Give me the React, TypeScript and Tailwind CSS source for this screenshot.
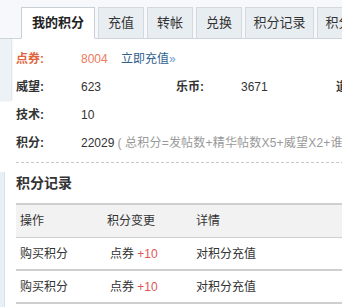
import React from "react";

const font = { fontFamily: '"Liberation Sans", "Noto Sans CJK SC", sans-serif' };

function Tab({ label, active, w }: { label: string; active?: boolean; w: string }) {
  if (active) {
    return (
      <div className={`${w} h-[32px] -mb-px bg-white border border-[#c9cfd6] border-b-white flex items-center justify-center text-[13px] font-bold text-[#222]`}>
        {label}
      </div>
    );
  }
  return (
    <div className={`${w} shrink-0 h-[31px] bg-[#e8edf2] border border-[#d3d9df] border-b-0 flex items-center justify-center text-[13px] text-[#333]`}>
      {label}
    </div>
  );
}

function Row({ children }: { children: React.ReactNode }) {
  return <div className="h-[28px] flex items-center whitespace-nowrap">{children}</div>;
}

export default function App() {
  return (
    <div className="w-[342px] h-[307px] overflow-hidden bg-white text-[12px] text-[#333]" style={font}>
      <div className="h-[39px] bg-[#f6f8fb] border-b border-[#cfd4da] flex items-end pl-[21px] gap-[3px]">
        <Tab label="我的积分" active w="w-[74px] shrink-0" />
        <Tab label="充值" w="w-[46px]" />
        <Tab label="转帐" w="w-[46px]" />
        <Tab label="兑换" w="w-[46px]" />
        <Tab label="积分记录" w="w-[69px]" />
        <Tab label="积分规则" w="w-[69px]" />
      </div>
      <div className="flex">
        <div className="w-[12px] shrink-0 flex flex-col">
          <div className="h-[61px] bg-[#edf2f7] border-r border-[#e0e6ec] shadow-[0_1px_2px_rgba(0,0,0,0.1)]" />
          <div className="h-[72px]" />
          <div className="h-[140px] w-[5px] bg-[#e9eff6] border-r border-[#d8e0e8]" />
        </div>
        <div className="flex-1 pl-[4px]">
          <div className="pt-[6px]">
            <Row>
              <span className="w-[65px] font-bold text-[#e0643c]">点券:</span>
              <span className="w-[40px] text-[#ee7a5c]">8004</span>
              <span className="text-[#2f5f8f]">立即充值<span className="text-[#6a9ad0]">»</span></span>
            </Row>
            <Row>
              <span className="w-[65px] shrink-0 font-bold">威望:</span>
              <span className="w-[95px] shrink-0">623</span>
              <span className="w-[65px] shrink-0 font-bold">乐币:</span>
              <span className="w-[95px] shrink-0">3671</span>
              <span className="shrink-0 font-bold">道具:</span>
            </Row>
            <Row>
              <span className="w-[65px] font-bold">技术:</span>
              <span>10</span>
            </Row>
            <Row>
              <span className="w-[65px] shrink-0 font-bold">积分:</span>
              <span>22029</span>
              <span className="text-[#999] ml-[3px] tracking-[0.2px]">( 总积分=发帖数+精华帖数X5+威望X2+谁</span>
            </Row>
          </div>
          <div className="mt-[5px] border-t border-dashed border-[#c8c8c8]" />
          <div className="h-[40px] flex items-center text-[14px] font-bold text-[#333]">积分记录</div>
          <div className="border-t-2 border-[#cfcfcf]">
            <div className="h-[33px] bg-[#f2f2f2] flex items-center border-b border-[#cfcfcf]">
              <span className="w-[91px] pl-[4px]">操作</span>
              <span className="w-[89px]">积分变更</span>
              <span>详情</span>
            </div>
            {[0, 1].map((i) => (
              <div key={i} className="h-[33px] flex items-center border-b-2 border-[#cfcfcf]">
                <span className="w-[91px] pl-[4px]">购买积分</span>
                <span className="w-[89px] pl-[3px]">
                  点券 <span className="text-[#e05555]">+10</span>
                </span>
                <span>对积分充值</span>
              </div>
            ))}
          </div>
        </div>
      </div>
    </div>
  );
}
